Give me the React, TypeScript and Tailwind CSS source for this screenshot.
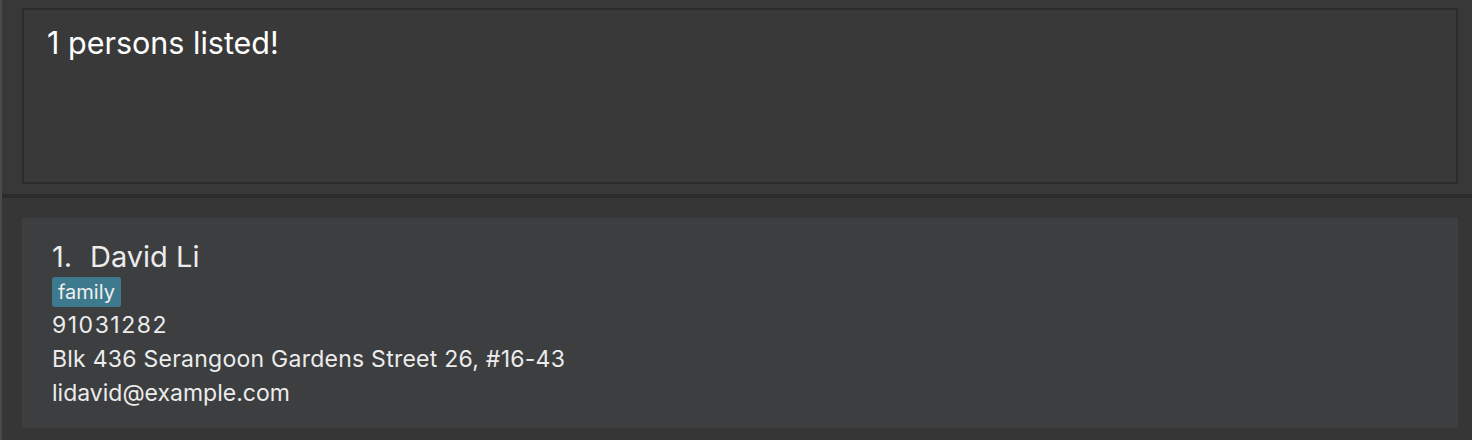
import React from "react";

export default function App() {
  const font = { fontFamily: "Inter, 'Noto Sans', sans-serif" };
  return (
    <div className="flex h-[440px] w-[1472px] overflow-hidden bg-[#383838]" style={font}>
      <div className="w-[2px] shrink-0 bg-[#4a4a4a]" />
      <div className="flex flex-1 flex-col">
        <div className="h-[194px] pl-[20px] pr-[14px] pt-[8px] pb-[10px]">
          <div className="h-[176px] border-2 border-[#2b2b2b] bg-[#393939] px-[23px] pt-[14px]">
            <div className="text-[30.5px] leading-[38px] text-white">1 persons listed!</div>
          </div>
        </div>
        <div className="h-[4px] bg-[#2b2b2b]" />
        <div className="flex-1 bg-[#363636] pl-[20px] pr-[14px] pt-[20px]">
          <div className="h-[210px] bg-[#3d3e40] px-[30px] pt-[22px] text-[#ececec]">
            <div className="flex text-[29px] leading-[34px]">
              <span className="w-[38px]">1.</span>
              <span>David Li</span>
            </div>
            <div className="mt-[3px] flex">
              <span className="rounded-[3px] bg-[#3e7a8e] px-[6px] text-[20px] leading-[30px] text-[#f0f0f0]">family</span>
            </div>
            <div className="mt-[1px] text-[23px] leading-[34px] tracking-[1.5px]">91031282</div>
            <div className="text-[23px] leading-[34px] tracking-[0.25px]">Blk 436 Serangoon Gardens Street 26, #16-43</div>
            <div className="text-[23px] leading-[34px]">lidavid@example.com</div>
          </div>
        </div>
      </div>
    </div>
  );
}
